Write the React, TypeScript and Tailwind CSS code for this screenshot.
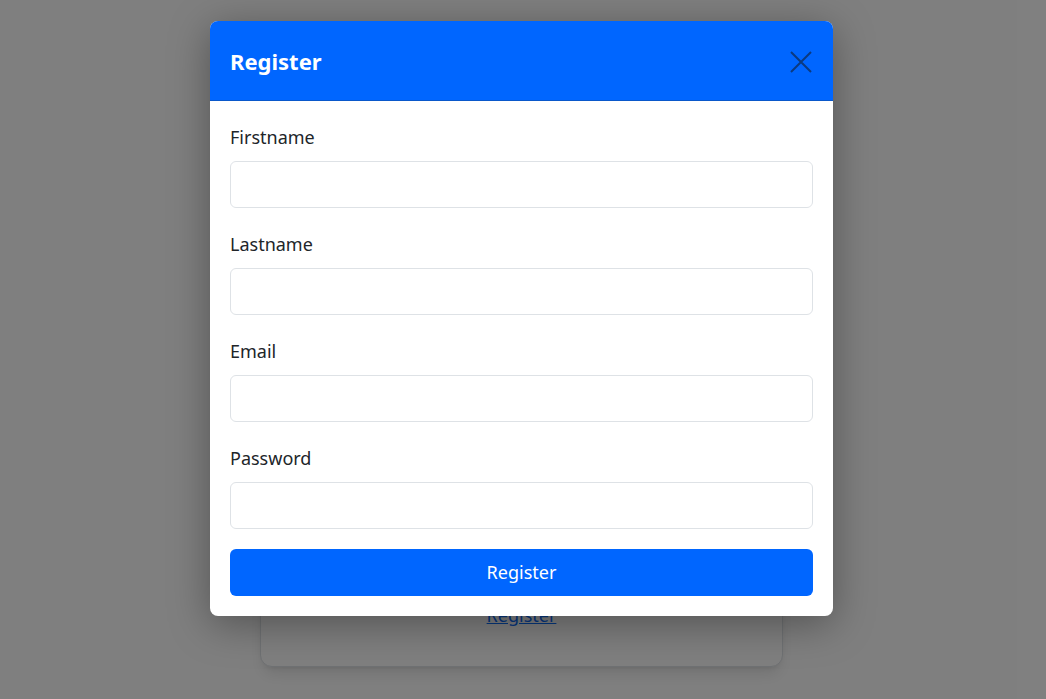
import { useState } from 'react';

const fields = ['Firstname', 'Lastname', 'Email', 'Password'];

function Field({ label }: { label: string }) {
  const [value, setValue] = useState('');
  return (
    <div className="flex flex-col">
      <label className="text-[18px] leading-[27px] text-[#212529] mb-[10px]">{label}</label>
      <input
        type={label === 'Password' ? 'password' : label === 'Email' ? 'email' : 'text'}
        value={value}
        onChange={(e) => setValue(e.target.value)}
        className="h-[47px] w-full rounded-[6px] border border-[#dee2e6] bg-white px-3 text-[18px] outline-none"
      />
    </div>
  );
}

export default function App() {
  return (
    <div className="relative h-[699px] w-full overflow-hidden bg-white font-['Noto_Sans',sans-serif]">
      {/* page behind the modal */}
      <div className="flex justify-center pt-[200px] pr-[3px]">
        <div className="flex h-[467px] w-[523px] flex-col items-center justify-end rounded-xl border border-[#dee2e6] bg-white pb-[37px] shadow-lg">
          <a href="#" className="text-[18px] text-[#0d6efd] underline">Register</a>
        </div>
      </div>

      {/* backdrop */}
      <div className="absolute inset-0 bg-black/50" />

      {/* modal */}
      <div className="absolute inset-0 flex justify-center pt-[21px] pr-[3px]">
        <div className="h-fit w-[623px] overflow-hidden rounded-[8px] bg-white shadow-[0_8px_40px_rgba(0,0,0,0.35)]">
          <div className="flex h-[80px] items-center justify-between border-b border-[#0a58ca] bg-[#0066ff] px-5 pt-[2px]">
            <h5 className="text-[22px] font-bold text-white">Register</h5>
            <button type="button" className="flex h-6 w-6 items-center justify-center">
              <svg width="22" height="22" viewBox="0 0 22 22" fill="none">
                <path d="M1 1L21 21M21 1L1 21" stroke="#0b3a80" strokeWidth="2" />
              </svg>
            </button>
          </div>
          <div className="flex flex-col gap-[23px] px-5 pt-[23px] pb-5">
            {fields.map((f) => (
              <Field key={f} label={f} />
            ))}
            <button
              type="button"
              className="mt-[-3px] h-[47px] w-full rounded-[6px] bg-[#0066ff] text-[18px] text-white"
            >
              Register
            </button>
          </div>
        </div>
      </div>
    </div>
  );
}
